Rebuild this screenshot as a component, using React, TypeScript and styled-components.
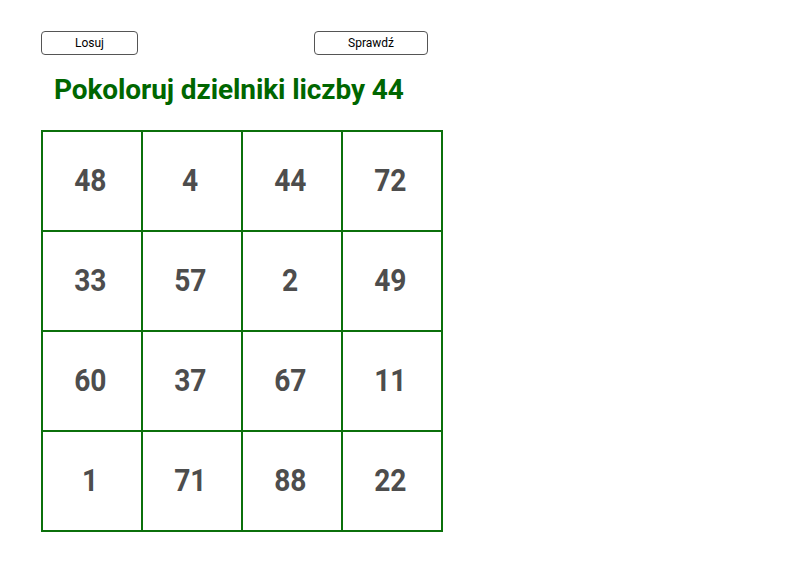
import React from 'react'
import styled, { createGlobalStyle } from 'styled-components'

const numbers = [48, 4, 44, 72, 33, 57, 2, 49, 60, 37, 67, 11, 1, 71, 88, 22]

const GlobalStyle = createGlobalStyle`
  html, body {
    margin: 0;
    padding: 0;
    background: #ffffff;
    font-family: Roboto, 'Liberation Sans', sans-serif;
  }
`

const Page = styled.div`
  width: 808px;
  height: 565px;
  padding: 31px 0 0 41px;
  box-sizing: border-box;
`

const Toolbar = styled.div`
  display: flex;
  align-items: center;
`

const Button = styled.button<{ $width: number; $gap?: number }>`
  width: ${(p) => p.$width}px;
  height: 24px;
  margin-left: ${(p) => p.$gap ?? 0}px;
  padding: 0;
  border: 1px solid #555555;
  border-radius: 4px;
  background: #ffffff;
  color: #000000;
  font-family: Roboto, 'Liberation Sans', sans-serif;
  font-size: 12px;
  cursor: pointer;
`

const Title = styled.h1`
  margin: 18px 0 0 13px;
  color: #006600;
  font-size: 28px;
  font-weight: bold;
  line-height: 34px;
  letter-spacing: -0.1px;
`

const Board = styled.div`
  display: grid;
  grid-template-columns: repeat(4, 100px);
  grid-auto-rows: 100px;
  width: max-content;
  margin-top: 23px;
  border-left: 2px solid #0b700b;
  border-top: 2px solid #0b700b;
`

const Cell = styled.div`
  display: flex;
  align-items: center;
  justify-content: center;
  padding: 0 4px 2px 0;
  border-right: 2px solid #0b700b;
  border-bottom: 2px solid #0b700b;
`

// digits are drawn a little narrower than plain Roboto bold
const Value = styled.span`
  display: inline-block;
  color: #4d4d4d;
  font-size: 32px;
  font-weight: bold;
  line-height: 1;
  transform: scaleX(0.88);
`

const App = () => {
  return (
    <Page>
      <GlobalStyle />
      <Toolbar>
        <Button $width={97}>Losuj</Button>
        <Button $width={114} $gap={176}>Sprawdź</Button>
      </Toolbar>
      <Title>Pokoloruj dzielniki liczby 44</Title>
      <Board>
        {numbers.map((n, i) => (
          <Cell key={`cell-${i}`}>
            <Value>{n}</Value>
          </Cell>
        ))}
      </Board>
    </Page>
  )
}

export default App
